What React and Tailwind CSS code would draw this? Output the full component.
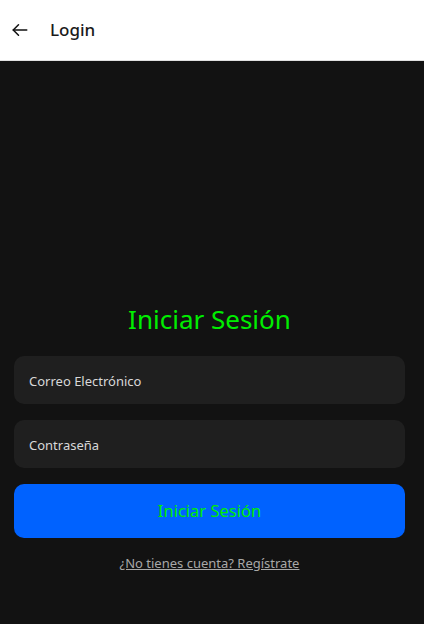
import React from "react";

export default function App() {
  return (
    <div className="w-[424px] h-[624px] flex flex-col bg-[#121212]" style={{ fontFamily: '"Noto Sans", "Open Sans", sans-serif' }}>
      <div className="h-[61px] bg-white border-b border-[#e0e0e0] flex items-center shrink-0">
        <div className="w-[50px] flex items-center pl-[11px]">
          <svg width="18" height="18" viewBox="0 0 24 24" fill="none" stroke="#111" strokeWidth="2" strokeLinecap="round" strokeLinejoin="round">
            <path d="M21 12H3" />
            <path d="M10 5l-7 7 7 7" />
          </svg>
        </div>
        <span className="text-[17px] font-medium text-[#1a1a1a]">Login</span>
      </div>
      <div className="flex-1 flex flex-col pl-[14px] pr-[19px] pt-[240px]">
        <h1 className="text-center text-[26px] leading-[36px] text-[#00ee00] font-normal">Iniciar Sesión</h1>
        <div className="mt-[19px] h-[48px] rounded-[10px] bg-[#1f1f1f] flex items-center px-[15px] pt-[3px] text-[13px] text-[#d8d8d8]">Correo Electrónico</div>
        <div className="mt-[16px] h-[48px] rounded-[10px] bg-[#1f1f1f] flex items-center px-[15px] pt-[3px] text-[13px] text-[#d8d8d8]">Contraseña</div>
        <button className="mt-[16px] h-[54px] rounded-[10px] bg-[#0062ff] text-[#00ee00] text-[16.5px]">Iniciar Sesión</button>
        <div className="mt-[12px] text-center">
          <span className="text-[13px] text-[#a8a8a8] underline">¿No tienes cuenta? Regístrate</span>
        </div>
      </div>
    </div>
  );
}
